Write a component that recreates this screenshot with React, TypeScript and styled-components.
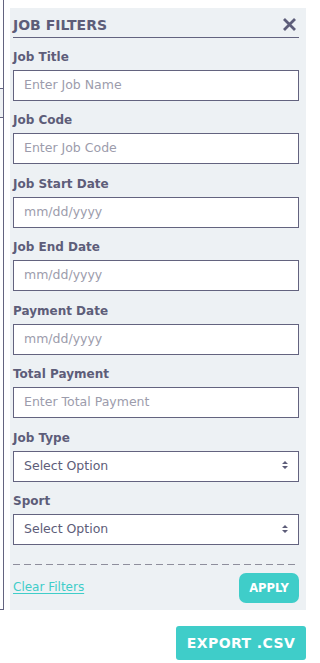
import React from 'react';
import styled, {createGlobalStyle} from 'styled-components';

const GlobalStyle = createGlobalStyle`
    html, body { margin: 0; padding: 0; background: #ffffff; }
    body { font-family: "DejaVu Sans", "Liberation Sans", sans-serif; }
`;

const colors = {
    panel: '#edf1f4',
    text: '#5d5d79',
    border: '#63637f',
    placeholder: '#9c9cac',
    teal: '#3fcdc9',
    dash: '#8e8e9c',
};

const Page = styled.div`
    width: 316px;
    height: 663px;
    display: flex;
    flex-direction: column;
    align-items: flex-end;
    overflow: hidden;
`;

const Workspace = styled.div`
    width: 316px;
    display: flex;
    align-items: flex-start;
    gap: 6px;
`;

const TableStub = styled.div`
    width: 3px;
    height: 609px;
    display: flex;
    flex-direction: column;
    border-right: 1px solid ${colors.border};
    border-bottom: 1px solid ${colors.border};
`;

const StubRow = styled.div<{$h: number; $shade?: boolean}>`
    height: ${({$h}) => $h}px;
    border-bottom: 1px solid ${colors.border};
    background: ${({$shade}) => ($shade ? '#eef1f4' : 'transparent')};
`;

const Panel = styled.aside`
    width: 296px;
    box-sizing: border-box;
    margin-top: 8px;
    height: 602px;
    background: ${colors.panel};
    padding: 0 7px 0 3px;
    display: flex;
    flex-direction: column;
    gap: 11.5px;
`;

const Header = styled.div`
    height: 30px;
    flex-shrink: 0;
    box-sizing: border-box;
    display: flex;
    align-items: center;
    justify-content: space-between;
    padding: 4px 2px 0 0;
    margin-bottom: -1px;
    border-bottom: 1px solid ${colors.border};
`;

const Title = styled.h2`
    margin: 0;
    font-size: 14px;
    font-weight: 700;
    color: ${colors.text};
`;

const CloseButton = styled.button`
    border: none;
    background: none;
    padding: 0;
    width: 15px;
    height: 15px;
    display: flex;
    cursor: pointer;
`;

const Field = styled.label`
    display: flex;
    flex-direction: column;
    gap: 5px;
`;

const FieldLabel = styled.span`
    font-size: 12px;
    line-height: 16px;
    font-weight: 700;
    color: ${colors.text};
`;

const TextInput = styled.input`
    box-sizing: border-box;
    width: 100%;
    height: 31px;
    margin: 0;
    border: 1px solid ${colors.border};
    border-radius: 0;
    background: #ffffff;
    padding: 0 10px 2px;
    font-family: inherit;
    font-size: 12.5px;
    color: ${colors.text};
    outline: none;

    &::placeholder {
        color: ${colors.placeholder};
    }
`;

const SelectBox = styled.div`
    box-sizing: border-box;
    height: 31px;
    border: 1px solid ${colors.border};
    background: #ffffff;
    padding: 0 9px 2px 10px;
    display: flex;
    align-items: center;
    justify-content: space-between;
    font-size: 12.5px;
    color: ${colors.text};
`;

const Divider = styled.div`
    height: 1px;
    margin: 7px 4px 0 0;
    background: repeating-linear-gradient(to right, ${colors.dash} 0 7px, transparent 7px 11px);
`;

const Footer = styled.div`
    display: flex;
    align-items: center;
    justify-content: space-between;
    margin-top: -3px;
`;

const ClearLink = styled.a`
    font-size: 12px;
    color: ${colors.teal};
    text-decoration: underline;
    text-underline-offset: 2px;
    margin-top: -2px;
    cursor: pointer;
`;

const TealButton = styled.button<{$size?: 'sm' | 'lg'}>`
    border: none;
    background: ${colors.teal};
    color: #ffffff;
    font-family: inherit;
    font-weight: 700;
    cursor: pointer;
    text-transform: uppercase;
    border-radius: ${({$size}) => ($size === 'lg' ? '3px' : '7px')};
    height: ${({$size}) => ($size === 'lg' ? '34px' : '30px')};
    width: ${({$size}) => ($size === 'lg' ? '130px' : '60px')};
    font-size: ${({$size}) => ($size === 'lg' ? '14px' : '11.5px')};
    letter-spacing: ${({$size}) => ($size === 'lg' ? '0.4px' : '0')};
    padding: 0;
`;

const ExportRow = styled.div`
    padding: 16px 10px 0 0;
`;

const CloseIcon = () => (
    <svg width="15" height="15" viewBox="0 0 15 15">
        <path d="M2 2 L13 13 M13 2 L2 13" stroke={colors.text} strokeWidth="2.8" strokeLinecap="butt"/>
    </svg>
);

const SortArrows = () => (
    <svg width="8" height="10" viewBox="0 0 8 10">
        <path d="M1 4 L4 1 L7 4 Z M1 6 L4 9 L7 6 Z" fill={colors.text}/>
    </svg>
);

const textFields = [
    {label: 'Job Title', placeholder: 'Enter Job Name'},
    {label: 'Job Code', placeholder: 'Enter Job Code'},
    {label: 'Job Start Date', placeholder: 'mm/dd/yyyy'},
    {label: 'Job End Date', placeholder: 'mm/dd/yyyy'},
    {label: 'Payment Date', placeholder: 'mm/dd/yyyy'},
    {label: 'Total Payment', placeholder: 'Enter Total Payment'},
];

const selectFields = ['Job Type', 'Sport'];

export default function App() {
    return (
        <Page>
            <GlobalStyle/>
            <Workspace>
                <TableStub>
                    <StubRow $h={88}/>
                    <StubRow $h={28} $shade/>
                </TableStub>
                <Panel>
                    <Header>
                        <Title>JOB FILTERS</Title>
                        <CloseButton aria-label="Close"><CloseIcon/></CloseButton>
                    </Header>
                    {textFields.map(f => (
                        <Field key={f.label}>
                            <FieldLabel>{f.label}</FieldLabel>
                            <TextInput placeholder={f.placeholder}/>
                        </Field>
                    ))}
                    {selectFields.map(label => (
                        <Field key={label}>
                            <FieldLabel>{label}</FieldLabel>
                            <SelectBox>
                                <span>Select Option</span>
                                <SortArrows/>
                            </SelectBox>
                        </Field>
                    ))}
                    <Divider/>
                    <Footer>
                        <ClearLink>Clear Filters</ClearLink>
                        <TealButton>Apply</TealButton>
                    </Footer>
                </Panel>
            </Workspace>
            <ExportRow>
                <TealButton $size="lg">Export .csv</TealButton>
            </ExportRow>
        </Page>
    );
}
